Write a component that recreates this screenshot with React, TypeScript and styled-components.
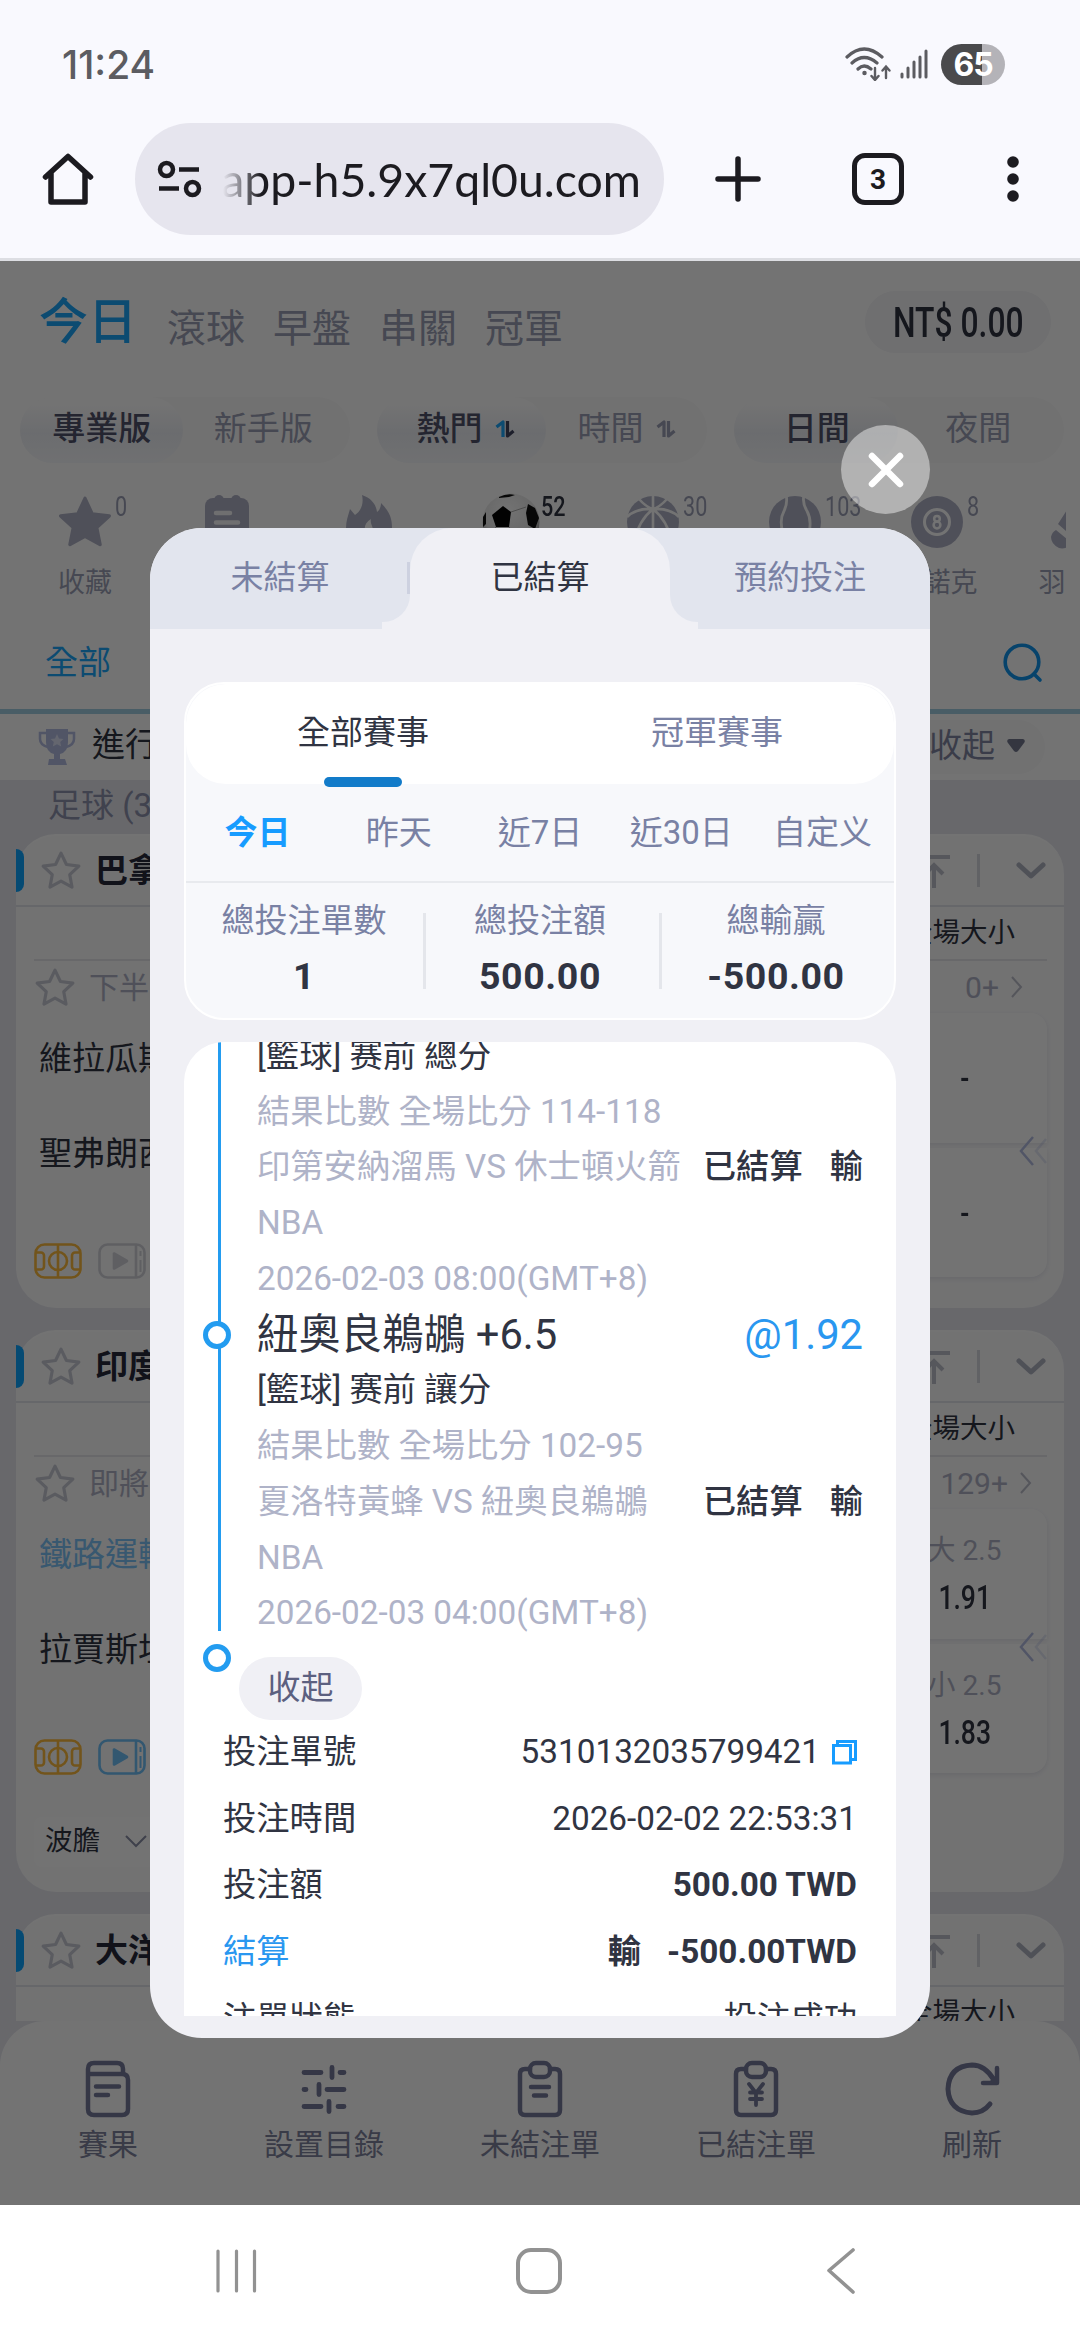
import React from "react";
import styled, { createGlobalStyle } from "styled-components";

const GlobalStyle = createGlobalStyle`
  * { box-sizing: border-box; }
  html, body { margin: 0; padding: 0; background: #fff; }
  body {
    font-family: Roboto, "Noto Sans CJK TC", "Noto Sans CJK SC", sans-serif;
    font-size: 33px;
    color: #303442;
    -webkit-font-smoothing: antialiased;
  }
`;

const INK = "#303442";
const MUTED = "#7981a4";
const PALE = "#9c9fb6";
const ICON = "#b0b2c6";
const SOFT = "#afb3c8";
const BLUE = "#179cff";
const SITE_BLUE = "#1ca6fb";

/* ---------- device chrome ---------- */

const Screen = styled.div`
  width: 1080px;
  height: 2340px;
  display: flex;
  flex-direction: column;
  overflow: hidden;
`;

const StatusBar = styled.header`
  height: 123px;
  padding: 5px 75px 0 62px;
  display: flex;
  align-items: center;
  justify-content: space-between;
  background: #f9f9fe;
`;

const Clock = styled.span`
  font-family: Inter, Roboto, sans-serif;
  font-size: 39px;
  font-weight: 500;
  letter-spacing: 0;
  color: #5c5c61;
`;

const StatusIcons = styled.div`
  display: flex;
  align-items: center;
  gap: 9px;
`;

const Battery = styled.span`
  width: 64px;
  height: 41px;
  margin-left: 4px;
  border-radius: 21px;
  display: grid;
  place-items: center;
  background: linear-gradient(90deg, #4a4a4c 64%, #b4b3b8 64%);
  color: #fff;
  font-family: Inter, Roboto, sans-serif;
  font-size: 32px;
  font-weight: 700;
  letter-spacing: -1px;
`;

const Toolbar = styled.div`
  height: 135px;
  display: flex;
  align-items: flex-start;
  background: #f9f9fe;
`;

const ToolSlot = styled.div<{ w: number }>`
  width: ${(p) => p.w}px;
  height: 112px;
  display: grid;
  place-items: center;
  flex: none;
`;

const AddressBar = styled.div`
  width: 529px;
  height: 112px;
  border-radius: 56px;
  padding: 0 23px 0 22px;
  display: flex;
  align-items: center;
  background: #e6e5ee;
  color: #1c1b20;
`;

const Address = styled.span`
  flex: 1;
  margin-left: 20px;
  display: flex;
  justify-content: flex-end;
  overflow: hidden;
  white-space: nowrap;
  font-family: Lato, Roboto, sans-serif;
  font-size: 46.4px;
  line-height: 64px;
  mask-image: linear-gradient(90deg, transparent 0, #000 38px);
`;

const TabCount = styled.span`
  width: 52px;
  height: 52px;
  border: 5.5px solid #1c1b20;
  border-radius: 13px;
  display: grid;
  place-items: center;
  font-size: 28px;
  font-weight: 700;
  color: #1c1b20;
`;

const ChromeLine = styled.div`
  height: 3px;
  background: #dddee3;
`;

const SystemNav = styled.footer`
  height: 135px;
  display: flex;
  align-items: center;
  justify-content: space-between;
  padding: 0 224px 4px 216px;
  background: #fff;
`;

/* ---------- betting page ---------- */

const Site = styled.main`
  position: relative;
  height: 1944px;
  flex: none;
  overflow: hidden;
`;

const Page = styled.div`
  height: 100%;
  display: flex;
  flex-direction: column;
  background: #fff;
`;

const TopTabs = styled.div`
  height: 127px;
  padding: 0 29px 0 39px;
  display: flex;
  align-items: center;
`;

const TopTab = styled.span<{ active?: boolean }>`
  font-size: ${(p) => (p.active ? 49 : 39)}px;
  font-weight: ${(p) => (p.active ? 500 : 400)};
  line-height: 50px;
  color: ${(p) => (p.active ? SITE_BLUE : PALE)};
  margin-right: ${(p) => (p.active ? 30 : 28)}px;
  padding: ${(p) => (p.active ? "0 0 3px" : "9px 0 0")};
`;

const Balance = styled.div`
  width: 186px;
  height: 62px;
  margin: 0 0 6px auto;
  border-radius: 31px;
  display: grid;
  place-items: center;
  background: #f5f5f8;
`;

const Condensed = styled.span<{ size: number; strong?: boolean; squeeze?: number }>`
  font-size: ${(p) => p.size}px;
  font-weight: ${(p) => (p.strong ? 500 : 400)};
  color: ${INK};
  white-space: nowrap;
  transform: scaleX(${(p) => p.squeeze ?? 0.78});
`;

const ModeRow = styled.div`
  height: 84px;
  padding: 9px 16px 9px 20px;
  display: flex;
  justify-content: space-between;
`;

const ModePill = styled.div`
  width: 330px;
  height: 66px;
  border-radius: 33px;
  display: flex;
  background: #fafafa;
`;

const Mode = styled.div<{ active?: boolean; shift?: number }>`
  flex: 1;
  display: flex;
  align-items: center;
  justify-content: center;
  gap: 12px;
  border-radius: 33px;
  padding-left: ${(p) => ((p.shift ?? 0) > 0 ? p.shift : 0)}px;
  padding-right: ${(p) => ((p.shift ?? 0) < 0 ? -(p.shift ?? 0) : 0)}px;
  padding-bottom: 2px;
  font-size: 33px;
  line-height: 44px;
  font-weight: ${(p) => (p.active ? 500 : 400)};
  color: ${(p) => (p.active ? "#50536c" : PALE)};
  background: ${(p) => (p.active ? "linear-gradient(180deg, #ffffff 10%, #eef0f6 55%, #f7f9fc)" : "none")};
`;

const Sports = styled.div`
  height: 140px;
  width: 1066px;
  padding-left: 14px;
  display: flex;
  overflow: hidden;
`;

const Sport = styled.div`
  width: 142px;
  flex: none;
  padding-top: 20px;
  display: flex;
  flex-direction: column;
  align-items: center;
`;

const SportIcon = styled.div`
  position: relative;
  width: 58px;
  height: 60px;
  display: grid;
  place-items: center;
`;

const SportCount = styled.span<{ dark?: boolean }>`
  position: absolute;
  left: 59px;
  top: 2px;
  font-size: 27px;
  line-height: 27px;
  font-weight: ${(p) => (p.dark ? 500 : 400)};
  color: ${(p) => (p.dark ? INK : PALE)};
  transform: scaleX(0.8);
  transform-origin: left;
`;

const SportName = styled.span`
  margin-top: 13px;
  font-size: 27px;
  line-height: 36px;
  white-space: nowrap;
  color: ${PALE};
`;

const FilterRow = styled.div`
  height: 102px;
  padding: 4px 37px 0 45px;
  display: flex;
  align-items: center;
  justify-content: space-between;
  line-height: 48px;
  color: ${SITE_BLUE};
  border-bottom: 5px solid #a3cfe2;
`;

const LiveRow = styled.div`
  height: 66px;
  padding: 0 35px 0 38px;
  display: flex;
  align-items: center;
`;

const LiveTitle = styled.span`
  margin-left: 16px;
  margin-top: -4px;
  line-height: 46px;
`;

const CollapseTag = styled.div`
  margin-left: auto;
  width: 160px;
  height: 54px;
  border-radius: 27px;
  padding: 0 20px 2px 0;
  display: flex;
  align-items: center;
  justify-content: flex-end;
  gap: 12px;
  line-height: 46px;
  background: #fafafb;
  color: #8286a2;
`;

const Leagues = styled.div`
  flex: 1;
  min-height: 0;
  overflow: hidden;
  padding: 0 16px;
  background: #e6e7ee;
`;

const LeagueHeading = styled.div`
  height: 54px;
  padding-left: 32px;
  line-height: 51px;
  color: #8e92ae;
`;

const LeagueCard = styled.section<{ h: number }>`
  height: ${(p) => p.h}px;
  margin-bottom: 22px;
  border-radius: 40px;
  border-top: 2px solid #fff;
  background: #fcfcfd;
`;

const LeagueHead = styled.div`
  height: 71px;
  padding-right: 18px;
  display: flex;
  align-items: center;
  border-bottom: 2px solid #e3e4ea;
`;

const BlueTick = styled.i`
  width: 8px;
  height: 43px;
  margin-right: 16px;
  border-radius: 0 8px 8px 0;
  background: #0ca4ff;
`;

const LeagueName = styled.b`
  margin: 1px 0 0 13px;
  font-weight: 700;
  line-height: 46px;
  color: #26293a;
  flex: 1;
`;

const Rule = styled.i`
  width: 3px;
  height: 33px;
  margin: 0 36px 0 27px;
  background: #d8d9e0;
`;

const MarketRow = styled.div`
  height: 54px;
  margin: 0 17px 0 18px;
  padding-right: 32px;
  text-align: right;
  font-size: 27.5px;
  line-height: 51px;
  border-bottom: 2px solid #e6e7ec;
`;

const MatchBody = styled.div`
  display: flex;
  justify-content: space-between;
  padding: 0 17px 0 18px;
`;

const MatchLeft = styled.div`
  width: 300px;
`;

const MatchTime = styled.div`
  height: 53px;
  display: flex;
  align-items: center;
  gap: 13px;
  font-size: 30px;
  line-height: 42px;
  color: ${ICON};
`;

const Team = styled.div<{ hot?: boolean }>`
  height: 95px;
  padding-left: 5px;
  line-height: 90px;
  white-space: nowrap;
  color: ${(p) => (p.hot ? "#7cc4f8" : INK)};
`;

const Media = styled.div`
  display: flex;
  gap: 16px;
  margin-top: 39px;
`;

const MatchRight = styled.div`
  width: 190px;
  display: flex;
  flex-direction: column;
`;

const MoreBets = styled.div<{ pad: number }>`
  height: 52px;
  padding-right: ${(p) => p.pad}px;
  display: flex;
  align-items: center;
  justify-content: flex-end;
  gap: 12px;
  font-size: 30px;
  color: ${ICON};
`;

const OddsGroup = styled.div`
  position: relative;
  display: grid;
  gap: 5px;
`;

const Odds = styled.div<{ first?: boolean }>`
  height: ${(p) => (p.first ? 130 : 129)}px;
  border-radius: ${(p) => (p.first ? "16px 16px 0 0" : "0 0 16px 16px")};
  padding-left: 25px;
  display: flex;
  flex-direction: column;
  align-items: center;
  justify-content: center;
  background: #fff;
  box-shadow: 0 2px 4px #e8e8ee;
`;

const OddsLabel = styled.span`
  height: 46px;
  line-height: 39px;
  font-size: 28px;
  color: ${ICON};
`;

const SwipeHint = styled.div`
  position: absolute;
  right: 0;
  top: 122px;
`;

const ExtraMarket = styled.div`
  width: 150px;
  height: 50px;
  margin: 42px 0 0 18px;
  padding: 0 37px 2px 11px;
  border-radius: 8px;
  display: flex;
  align-items: center;
  justify-content: space-between;
  white-space: nowrap;
  font-size: 27.5px;
  line-height: 40px;
  background: #fff;
`;

const DockWrap = styled.div`
  background: #e6e7ee;
`;

const Dock = styled.nav`
  height: 184px;
  padding-top: 39px;
  border-radius: 45px 45px 0 0;
  display: grid;
  grid-template-columns: repeat(5, 1fr);
  background: #fff;
`;

const DockItem = styled.div`
  display: flex;
  flex-direction: column;
  align-items: center;
  gap: 7px;
  font-size: 30px;
  line-height: 40px;
  color: #7f839e;
`;

/* ---------- dialog ---------- */

const Mask = styled.div`
  position: absolute;
  inset: 0;
  background: rgba(0, 0, 0, 0.55);
`;

const CloseButton = styled.button`
  position: absolute;
  left: 841px;
  top: 164px;
  width: 89px;
  height: 89px;
  padding: 0;
  border: 0;
  border-radius: 50%;
  display: grid;
  place-items: center;
  background: rgba(255, 255, 255, 0.45);
`;

const Dialog = styled.div`
  position: absolute;
  left: 150px;
  top: 267px;
  width: 780px;
  height: 1510px;
  border-radius: 52px;
  overflow: hidden;
  display: flex;
  flex-direction: column;
  background: #f0f0f5;
`;

const Tabs = styled.div`
  height: 101px;
  display: grid;
  grid-template-columns: 260px 260px 260px;
`;

const Tab = styled.div<{ side: "left" | "mid" | "right" }>`
  position: relative;
  height: ${(p) => (p.side === "mid" ? 101 : 94)}px;
  display: grid;
  place-items: center;
  padding-bottom: ${(p) => (p.side === "mid" ? 8 : 1)}px;
  font-size: 33px;
  color: ${(p) => (p.side === "mid" ? INK : MUTED)};
  background: ${(p) => (p.side === "mid" ? "linear-gradient(#e2e5ee 60px, #f0f0f5 60px)" : "#e2e5ee")};
  border-radius: ${(p) => (p.side === "left" ? "0 0 27px 0" : p.side === "right" ? "0 0 0 27px" : "0")};

  &::after {
    content: "";
    display: ${(p) => (p.side === "mid" ? "none" : "block")};
    position: absolute;
    top: 90px;
    height: 11px;
    width: 232px;
    left: ${(p) => (p.side === "left" ? 0 : 28)}px;
    background: #e2e5ee;
  }
`;

const TabFace = styled.div`
  width: 260px;
  height: 101px;
  margin-bottom: -8px;
  padding-bottom: 8px;
  border-radius: 42px 42px 0 0;
  display: grid;
  place-items: center;
  background: #f0f0f5;
`;

const TabRule = styled.i`
  position: absolute;
  right: 0;
  top: 34px;
  width: 3px;
  height: 32px;
  background: #cdd1e0;
`;

const Summary = styled.section`
  height: 338px;
  margin: 53px 34px 0;
  flex: none;
  border: 2px solid #fff;
  border-radius: 40px;
  overflow: hidden;
  background: #f7f8fb;
`;

const KindTabs = styled.div`
  height: 100px;
  border-radius: 40px;
  display: grid;
  grid-template-columns: 1fr 1fr;
  background: #fff;
`;

const Kind = styled.div<{ active?: boolean }>`
  display: flex;
  flex-direction: column;
  align-items: center;
  line-height: 48px;
  padding-top: 25px;
  color: ${(p) => (p.active ? INK : MUTED)};
`;

const KindBar = styled.i`
  position: relative;
  width: 78px;
  height: 10px;
  flex: none;
  margin-top: 20px;
  border-radius: 5px;
  background: #127bc9;
`;

const Dates = styled.div`
  height: 99px;
  display: grid;
  grid-template-columns: repeat(5, 1fr);
  padding: 0 1px;
  border-bottom: 2px solid #e8eaee;
`;

const DateTab = styled.div<{ active?: boolean }>`
  text-align: center;
  line-height: 98px;
  white-space: nowrap;
  font-weight: ${(p) => (p.active ? 700 : 400)};
  color: ${(p) => (p.active ? BLUE : MUTED)};
`;

const Totals = styled.div`
  display: grid;
  grid-template-columns: repeat(3, 1fr);
  padding-top: 14px;
`;

const Total = styled.div`
  position: relative;
  display: flex;
  flex-direction: column;
  align-items: center;
  height: 120px;
  line-height: 48px;
  color: ${MUTED};

  &:not(:last-child)::after {
    content: "";
    position: absolute;
    right: -4px;
    top: 16px;
    width: 3px;
    height: 76px;
    background: #e4e6eb;
  }
`;

const TotalValue = styled.b`
  font-size: 37.5px;
  line-height: 44px;
  margin-top: 9px;
  font-weight: 700;
  color: ${INK};
  letter-spacing: 0.6px;
`;

const Scroller = styled.section`
  height: 974px;
  margin: 22px 34px 0;
  padding: 0 35px 0 34px;
  border-radius: 40px 40px 0 0;
  overflow: hidden;
  background: #fff;
`;

const Legs = styled.div`
  display: flow-root;
  height: 589px;
  margin-right: -2px;
  padding-left: 36px;
  border-left: 3px solid #239cf0;
`;

const LegLine = styled.div<{ tone?: string; big?: boolean }>`
  height: 55.75px;
  display: flex;
  align-items: center;
  justify-content: space-between;
  white-space: nowrap;
  font-size: ${(p) => (p.big ? 41.7 : 33.3)}px;
  line-height: 48px;
  color: ${(p) => p.tone ?? INK};
`;

const ScrolledLeg = styled.div`
  margin-top: -14px;
`;

const Verdict = styled.b`
  display: flex;
  gap: 27px;
  font-weight: 500;
  color: ${INK};
`;

const Accent = styled.span`
  color: #2997f0;
`;

const LegHead = styled.div`
  position: relative;
`;

const Dot = styled.i<{ floating?: boolean }>`
  width: 28px;
  height: 28px;
  border: 5px solid #239cf0;
  border-radius: 50%;
  background: #fff;
  flex: none;
  ${(p) => (p.floating ? "position: absolute; left: -54px; top: 14px;" : "margin: 13px 0 0 -15px;")}
`;

const FoldRow = styled.div`
  height: 88px;
  display: flex;
`;

const FoldButton = styled.button`
  width: 123px;
  height: 63px;
  margin: 26px 0 0 8px;
  padding: 0 0 2px;
  border: 0;
  border-radius: 32px;
  font: inherit;
  line-height: 48px;
  color: #5c6080;
  background: #f0f0f5;
`;

const Detail = styled.div`
  height: 66.6px;
  padding: 0 4px 0 5px;
  display: flex;
  align-items: center;
  justify-content: space-between;
  font-size: 33.3px;
  line-height: 48px;
  white-space: nowrap;
`;

const Value = styled.span<{ strong?: boolean }>`
  display: flex;
  align-items: center;
  gap: ${(p) => (p.strong ? 26 : 12)}px;
  font-weight: ${(p) => (p.strong ? 700 : 400)};
`;

/* ---------- icons ---------- */

const Star = () => (
  <svg width="42" height="42" viewBox="0 0 24 24" fill="none" stroke="#c8cad4" strokeWidth="1.8" strokeLinejoin="round">
    <path d="M12 1.8l3.1 6.5 7.1.9-5.2 4.9 1.3 7.1-6.3-3.4-6.3 3.4L7 14.1 1.8 9.2l7.1-.9z" />
  </svg>
);

const Pitch = () => (
  <svg width="48" height="36" viewBox="0 0 48 36" fill="none" stroke="#fdbb3c" strokeWidth="2.6">
    <rect x="1.5" y="1.5" width="45" height="33" rx="9" />
    <path d="M24 2v32M2 9.500h5a3 3 0 0 1 3 3v11a3 3 0 0 1-3 3H2M46 9.500h-5a3 3 0 0 0-3 3v11a3 3 0 0 0 3 3h5" />
    <circle cx="24" cy="18" r="9" />
  </svg>
);

const Play = ({ live }: { live?: boolean }) => {
  const c = live ? "#6fc0f8" : "#d2d3da";
  return (
    <svg width="48" height="36" viewBox="0 0 48 36" fill="none" stroke={c} strokeWidth="2.6">
      <rect x="1.500" y="1.500" width="45" height="33" rx="8" />
      <path d="M38 2v32" />
      <path d="M42.500 8v5M42.500 17v12" strokeWidth="2" />
      <path d="M16 10.500v15L29 18z" fill={c} strokeLinejoin="round" />
    </svg>
  );
};

const ToTop = () => (
  <svg width="32" height="34" viewBox="0 0 32 34" fill="none" stroke="#bfc2cd" strokeWidth="4">
    <path d="M0 3h32M16 34V12M7 20l9-9 9 9" />
  </svg>
);

const ChevronDown = () => (
  <svg width="30" height="18" viewBox="0 0 30 18" fill="none" stroke="#b0b3c2" strokeWidth="5" strokeLinecap="round" strokeLinejoin="round">
    <path d="M3 3l12 11L27 3" />
  </svg>
);

const ChevronRight = () => (
  <svg width="12" height="22" viewBox="0 0 12 22" fill="none" stroke="#bcbecb" strokeWidth="2">
    <path d="M1 1l9 10-9 10" />
  </svg>
);

const Swipe = () => (
  <svg width="28" height="30" viewBox="0 0 28 30" fill="none" stroke="#b4bde2" strokeWidth="2.500">
    <path d="M14 1L2 15l12 14" />
    <path d="M27 3L17 15l10 12" opacity=".35" />
  </svg>
);

const SortArrows = ({ active }: { active?: boolean }) => (
  <svg width="20" height="18" viewBox="0 0 20 18" fill="none" strokeWidth="3.200" strokeLinejoin="round">
    <path d="M1.500 7L8 2v15" stroke={active ? SITE_BLUE : PALE} />
    <path d="M12.500 1v15l6-5" stroke={active ? "#42455f" : PALE} />
  </svg>
);

const SolidStar = () => (
  <svg width="54" height="54" viewBox="0 0 24 24" fill={ICON}>
    <path stroke={ICON} strokeWidth="1.500" strokeLinejoin="round" d="M12 1.500l3.200 6.900 7.600.9-5.600 5.200 1.500 7.500L12 18.300 5.300 22l1.500-7.500L1.200 9.300l7.600-.9z" />
  </svg>
);

const Calendar = () => (
  <svg width="46" height="54" viewBox="0 0 46 54">
    <rect x="1" y="3" width="44" height="51" rx="8" fill={ICON} />
    <rect x="10" y="0" width="10" height="12" rx="5" fill={ICON} />
    <rect x="27" y="0" width="10" height="12" rx="5" fill={ICON} />
    <path d="M12 18h14M12 27.500h22" stroke="#f6f6f8" strokeWidth="4.500" strokeLinecap="round" />
  </svg>
);

const Flame = () => (
  <svg width="48" height="54" viewBox="0 0 48 54" fill={ICON}>
    <path d="M17 0c9 3 14 9 15 17 3-2 4-6 4-9 8 8 11 15 11 24 0 13-8 22-16 22 3-6 3-14-3-20-1-4-3-6-2-10-5 3-7 7-6 12-5 5-6 11-4 18C7 52 1 44 1 33c0-7 2-12 4-19l5 6c6-4 9-11 7-20z" />
  </svg>
);

const Soccer = () => (
  <svg width="58" height="58" viewBox="0 0 58 58">
    <defs>
      <radialGradient id="ball" cx="45%" cy="30%" r="75%">
        <stop offset="0" stopColor="#fff" />
        <stop offset=".6" stopColor="#e6e6e6" />
        <stop offset="1" stopColor="#6c6c6c" />
      </radialGradient>
    </defs>
    <circle cx="29" cy="29" r="28.500" fill="url(#ball)" />
    <path d="M10 22l11-9 8 6-2 15H14z" fill="#050505" />
    <path d="M17 4q8-4 16-2l-6 2-10 1zM46 11l7 4 4 10-4 11-7-4-2-12zM1 24l3-5v12l-3 3z" fill="#111" />
    <path d="M29 19l15-5M27 34l6 10M14 34L7 42" stroke="#aaa" fill="none" />
  </svg>
);

const Basketball = () => (
  <svg width="52" height="54" viewBox="0 0 52 54">
    <circle cx="26" cy="27" r="26" fill={ICON} />
    <path d="M26 0v54M0 22Q9 13 26 14q17-1 26 8M12 4q7 8 14 10 7-2 14-10M8 46q3-20 18-32 15 12 18 32" stroke="#fff" strokeWidth="2.600" fill="none" />
  </svg>
);

const Tennis = () => (
  <svg width="52" height="54" viewBox="0 0 52 54">
    <circle cx="26" cy="27" r="26" fill={ICON} />
    <path d="M17 0q2 8-2 16-5 9-1 22M35 0q-2 8 3 16 5 9 2 22" stroke="#fff" strokeWidth="2.800" fill="none" />
  </svg>
);

const EightBall = () => (
  <svg width="52" height="54" viewBox="0 0 52 54" fill="none" stroke="#fff">
    <circle cx="26" cy="27" r="26" fill={ICON} stroke="none" />
    <circle cx="26" cy="27" r="12.500" strokeWidth="3" />
    <circle cx="26" cy="23.800" r="2.800" strokeWidth="2.500" />
    <circle cx="26" cy="30" r="3.400" strokeWidth="2.500" />
  </svg>
);

const Shuttle = () => (
  <svg width="60" height="54" viewBox="0 0 60 54" fill={ICON}>
    <path d="M24 4L8 29l16 14 22-16V8L36 14zM6 35l16 13q-6 7-13 5Q1 49 1 42q1-5 5-7z" />
  </svg>
);

const Magnifier = () => (
  <svg width="40" height="40" viewBox="0 0 40 40" fill="none" stroke="#1095ee" strokeWidth="3.600" strokeLinecap="round">
    <circle cx="19" cy="19" r="16.800" />
    <path d="M31 31l6 6" />
  </svg>
);

const Trophy = () => (
  <svg width="38" height="38" viewBox="0 0 38 38">
    <path d="M8 1h22v13q0 10-8 12v5h5l2 6H10l1-6h5v-5q-8-2-8-12z" fill="#b3bce2" />
    <path d="M8 5H2v6q0 6 8 8M30 5h6v6q0 6-8 8" fill="none" stroke="#b3bce2" strokeWidth="2.500" />
    <path d="M19 6l2 4.500 4.500.5-3.300 3 1 4.500L19 16.200 14.800 18.500l1-4.500-3.300-3 4.500-.5z" fill="#dde2f6" />
  </svg>
);

const DOCK_INK = "#777b9c";

const ResultIcon = () => (
  <svg width="48" height="58" viewBox="0 0 48 58" fill="none" stroke={DOCK_INK} strokeWidth="4.500" strokeLinecap="round">
    <path d="M4 14V9q0-6 6-6h23q6 0 6 6v5M4 10v39q0 6 6 6h28q6 0 6-6V20q0-6-6-6H4" />
    <path d="M12 26.500h23M12 35h12" />
  </svg>
);

const SlidersIcon = () => (
  <svg width="48" height="58" viewBox="0 0 48 58" fill="none" stroke={DOCK_INK} strokeWidth="4.800" strokeLinecap="round">
    <path d="M4 12.500h17M32 7.500v10M40 12.500h4M4 29.500h2M19 24.500v10M27 29.500h17M4 46.500h17M29 41.500v10M38 46.500h6" />
  </svg>
);

const ClipboardIcon = ({ yen }: { yen?: boolean }) => (
  <svg width="48" height="58" viewBox="0 0 48 58" fill="none" stroke={DOCK_INK} strokeWidth="4.500" strokeLinecap="round" strokeLinejoin="round">
    <path d="M14 9h-5q-5 0-5 5v36q0 5 5 5h30q5 0 5-5V14q0-5-5-5h-5" />
    <rect x="14" y="3" width="20" height="14" rx="6" />
    {yen ? <path d="M17 24l7 9 7-9M24 33v12M18 32.500h12M18 39h12" strokeWidth="3.800" /> : <path d="M15 27h18M18 35.500h12" />}
  </svg>
);

const RefreshIcon = () => (
  <svg width="56" height="58" viewBox="0 0 56 58" fill="none" stroke={DOCK_INK} strokeWidth="5" strokeLinecap="round" strokeLinejoin="round">
    <path d="M46 44q-7 9-18 9Q5 51 4 29 5 6 28 5q13 0 22 15" />
    <path d="M53 8v15H39" strokeWidth="4.500" />
    <path d="M53 14v9h-9z" fill={DOCK_INK} stroke="none" />
  </svg>
);

const CopyIcon = () => (
  <svg width="25" height="25" viewBox="0 0 25 25" fill="none" stroke={BLUE} strokeWidth="3">
    <path d="M5.500 5V1.500h18v18H20" />
    <rect x="1.500" y="5.500" width="17" height="17.500" />
  </svg>
);

/* ---------- data ---------- */

const sports = [
  { icon: <SolidStar />, count: "0", name: "收藏" },
  { icon: <Calendar /> },
  { icon: <Flame /> },
  { icon: <Soccer />, count: "52", dark: true },
  { icon: <Basketball />, count: "30" },
  { icon: <Tennis />, count: "103" },
  { icon: <EightBall />, count: "8", name: "斯諾克" },
  { icon: <Shuttle />, name: "羽毛球" },
];

type LeagueProps = {
  name: string;
  height: number;
  match?: {
    time: string;
    home: string;
    away: string;
    hot?: boolean;
    more: string;
    odds: { label?: string; value: string }[];
    extra?: string;
  };
};

const League = ({ name, height, match }: LeagueProps) => (
  <LeagueCard h={height}>
    <LeagueHead>
      <BlueTick />
      <Star />
      <LeagueName>{name}</LeagueName>
      <ToTop />
      <Rule />
      <ChevronDown />
    </LeagueHead>
    <MarketRow>全場大小</MarketRow>
    {match && (
      <MatchBody>
        <MatchLeft>
          <MatchTime>
            <Star />
            {match.time}
          </MatchTime>
          <Team hot={match.hot}>{match.home}</Team>
          <Team>{match.away}</Team>
          <Media>
            <Pitch />
            <Play live={match.hot} />
          </Media>
        </MatchLeft>
        <MatchRight>
          <MoreBets pad={match.hot ? 15 : 24}>
            {match.more}
            <ChevronRight />
          </MoreBets>
          <OddsGroup>
            {match.odds.map((o, i) => (
              <Odds key={i} first={i === 0}>
                {o.label && <OddsLabel>{o.label}</OddsLabel>}
                <Condensed size={34} strong>
                  {o.value}
                </Condensed>
              </Odds>
            ))}
            <SwipeHint>
              <Swipe />
            </SwipeHint>
          </OddsGroup>
        </MatchRight>
      </MatchBody>
    )}
    {match?.extra && (
      <ExtraMarket>
        {match.extra}
        <svg width="22" height="13" viewBox="0 0 22 13" fill="none" stroke="#8b8fa6" strokeWidth="2">
          <path d="M1 1l10 10L21 1" />
        </svg>
      </ExtraMarket>
    )}
  </LeagueCard>
);

const LegInfo = ({ kind, score, teams, date }: { kind: string; score: string; teams: string; date: string }) => (
  <>
    <LegLine>{kind}</LegLine>
    <LegLine tone={SOFT}>{score}</LegLine>
    <LegLine tone={SOFT}>
      {teams}
      <Verdict>
        <span>已結算</span>
        <span>輸</span>
      </Verdict>
    </LegLine>
    <LegLine tone={SOFT}>NBA</LegLine>
    <LegLine tone={SOFT}>{date}</LegLine>
  </>
);

export default function App() {
  return (
    <Screen>
      <GlobalStyle />
      <StatusBar>
        <Clock>11:24</Clock>
        <StatusIcons>
          <svg width="46" height="34" viewBox="0 0 46 34" fill="none" stroke="#5c5c61" strokeWidth="3.200" strokeLinecap="round">
            <path d="M2 10q17-16 35 0M7 16q12-11 25 0M13 22q6-6 13 0" />
            <circle cx="19.500" cy="26" r="1.500" fill="#5c5c61" strokeWidth="1.500" />
            <path d="M30 21v11M26.500 29l3.500 4 3.500-4M41 31V20M37.500 23.500L41 19.500l3.500 4" strokeWidth="2.400" />
          </svg>
          <svg width="28" height="30" viewBox="0 0 28 30" stroke="#5c5c61" strokeWidth="3" strokeLinecap="round">
            <path d="M2 25v3M8 19v9M14 13v15M20 8v20M26 2v26" />
          </svg>
          <Battery>65</Battery>
        </StatusIcons>
      </StatusBar>
      <Toolbar>
        <ToolSlot w={135}>
          <svg width="52" height="54" viewBox="0 0 52 54" fill="none" stroke="#1c1b20" strokeWidth="5.500" strokeLinejoin="round" strokeLinecap="round">
            <path d="M3.500 25L26 4.500 48.500 25M9 21v29h34V21" />
          </svg>
        </ToolSlot>
        <AddressBar>
          <svg width="46" height="38" viewBox="0 0 46 38" fill="none" stroke="#1c1b20" strokeWidth="4.500">
            <circle cx="9.500" cy="9.500" r="6.500" />
            <circle cx="35.500" cy="28.500" r="6.500" />
            <path d="M22 9.500h20M2 28.500h20" />
          </svg>
          <Address>app-h5.9x7ql0u.com</Address>
        </AddressBar>
        <ToolSlot w={147}>
          <svg width="46" height="46" viewBox="0 0 46 46" stroke="#1c1b20" strokeWidth="5.500" strokeLinecap="round">
            <path d="M23 3v40M3 23h40" />
          </svg>
        </ToolSlot>
        <ToolSlot w={134}>
          <TabCount>3</TabCount>
        </ToolSlot>
        <ToolSlot w={135}>
          <svg width="12" height="46" viewBox="0 0 12 46" fill="#1c1b20">
            <circle cx="6" cy="6" r="5.800" />
            <circle cx="6" cy="23" r="5.800" />
            <circle cx="6" cy="40" r="5.800" />
          </svg>
        </ToolSlot>
      </Toolbar>
      <ChromeLine />

      <Site>
        <Page>
          <TopTabs>
            <TopTab active>今日</TopTab>
            {["滾球", "早盤", "串關", "冠軍"].map((t) => (
              <TopTab key={t}>{t}</TopTab>
            ))}
            <Balance>
              <Condensed size={43} strong squeeze={0.74}>NT$ 0.00</Condensed>
            </Balance>
          </TopTabs>
          <ModeRow>
            <ModePill>
              <Mode active shift={1}>專業版</Mode>
              <Mode shift={-6}>新手版</Mode>
            </ModePill>
            <ModePill>
              <Mode active shift={8}>
                熱門 <SortArrows active />
              </Mode>
              <Mode>
                時間 <SortArrows />
              </Mode>
            </ModePill>
            <ModePill>
              <Mode active shift={2}>日間</Mode>
              <Mode shift={-5}>夜間</Mode>
            </ModePill>
          </ModeRow>
          <Sports>
            {sports.map((s, i) => (
              <Sport key={i}>
                <SportIcon>
                  {s.icon}
                  {s.count && <SportCount dark={s.dark}>{s.count}</SportCount>}
                </SportIcon>
                {s.name && <SportName>{s.name}</SportName>}
              </Sport>
            ))}
          </Sports>
          <FilterRow>
            <span>全部</span>
            <Magnifier />
          </FilterRow>
          <LiveRow>
            <Trophy />
            <LiveTitle>進行中</LiveTitle>
            <CollapseTag>
              收起
              <svg width="18" height="14" viewBox="0 0 18 14" fill="#74788f">
                <path d="M2 0h14q3 1 1 4l-6 8q-2 2-4 0L1 4q-2-3 1-4z" />
              </svg>
            </CollapseTag>
          </LiveRow>
          <Leagues>
            <LeagueHeading>足球 (3</LeagueHeading>
            <League
              name="巴拿馬"
              height={474}
              match={{
                time: "下半",
                home: "維拉瓜斯",
                away: "聖弗朗西",
                more: "0+",
                odds: [{ value: "-" }, { value: "-" }],
              }}
            />
            <League
              name="印度"
              height={562}
              match={{
                time: "即將",
                home: "鐵路運輸",
                away: "拉賈斯坦",
                hot: true,
                more: "129+",
                odds: [
                  { label: "大 2.5", value: "1.91" },
                  { label: "小 2.5", value: "1.83" },
                ],
                extra: "波膽",
              }}
            />
            <League name="大洋" height={300} />
          </Leagues>
          <DockWrap>
            <Dock>
              <DockItem><ResultIcon />賽果</DockItem>
              <DockItem><SlidersIcon />設置目錄</DockItem>
              <DockItem><ClipboardIcon />未結注單</DockItem>
              <DockItem><ClipboardIcon yen />已結注單</DockItem>
              <DockItem><RefreshIcon />刷新</DockItem>
            </Dock>
          </DockWrap>
        </Page>

        <Mask />
        <CloseButton aria-label="close">
          <svg width="36" height="36" viewBox="0 0 36 36" stroke="#fff" strokeWidth="6.500" strokeLinecap="round">
            <path d="M4 4l28 28M32 4L4 32" />
          </svg>
        </CloseButton>

        <Dialog>
          <Tabs>
            <Tab side="left">
              未結算
              <TabRule />
            </Tab>
            <Tab side="mid">
              <TabFace>已結算</TabFace>
            </Tab>
            <Tab side="right">預約投注</Tab>
          </Tabs>

          <Summary>
            <KindTabs>
              <Kind active>
                全部賽事
                <KindBar />
              </Kind>
              <Kind>冠軍賽事</Kind>
            </KindTabs>
            <Dates>
              <DateTab active>今日</DateTab>
              <DateTab>昨天</DateTab>
              <DateTab>近7日</DateTab>
              <DateTab>近30日</DateTab>
              <DateTab>自定义</DateTab>
            </Dates>
            <Totals>
              <Total>總投注單數<TotalValue>1</TotalValue></Total>
              <Total>總投注額<TotalValue>500.00</TotalValue></Total>
              <Total>總輸贏<TotalValue>-500.00</TotalValue></Total>
            </Totals>
          </Summary>

          <Scroller>
            <Legs>
              <ScrolledLeg>
                <LegInfo
                  kind="[籃球] 赛前 總分"
                  score="結果比數 全場比分 114-118"
                  teams="印第安納溜馬 VS 休士頓火箭"
                  date="2026-02-03 08:00(GMT+8)"
                />
              </ScrolledLeg>
              <LegHead>
                <Dot floating />
                <LegLine big>
                  紐奧良鵜鶘 +6.5
                  <Accent>@1.92</Accent>
                </LegLine>
              </LegHead>
              <LegInfo
                kind="[籃球] 赛前 讓分"
                score="結果比數 全場比分 102-95"
                teams="夏洛特黃蜂 VS 紐奧良鵜鶘"
                date="2026-02-03 04:00(GMT+8)"
              />
            </Legs>
            <FoldRow>
              <Dot />
              <FoldButton>收起</FoldButton>
            </FoldRow>
            <Detail>
              <span>投注單號</span>
              <Value>
                5310132035799421
                <CopyIcon />
              </Value>
            </Detail>
            <Detail>
              <span>投注時間</span>
              <Value>2026-02-02 22:53:31</Value>
            </Detail>
            <Detail>
              <span>投注額</span>
              <Value strong>500.00 TWD</Value>
            </Detail>
            <Detail>
              <Accent>結算</Accent>
              <Value strong>
                <span>輸</span>
                <span>-500.00TWD</span>
              </Value>
            </Detail>
            <Detail>
              <span>注單狀態</span>
              <Value>投注成功</Value>
            </Detail>
          </Scroller>
        </Dialog>
      </Site>

      <SystemNav>
        <svg width="42" height="44" viewBox="0 0 42 44" stroke="#929292" strokeWidth="3.200" strokeLinecap="round">
          <path d="M2 2v40M20.500 2v40M38.500 2v40" />
        </svg>
        <svg width="46" height="46" viewBox="0 0 46 46" fill="none" stroke="#929292" strokeWidth="4">
          <rect x="2" y="2" width="42" height="42" rx="13" />
        </svg>
        <svg width="36" height="46" viewBox="-6 0 36 46" fill="none" stroke="#929292" strokeWidth="3.600" strokeLinecap="round" strokeLinejoin="round">
          <path d="M27 2L3 22.500 27 44" />
        </svg>
      </SystemNav>
    </Screen>
  );
}
